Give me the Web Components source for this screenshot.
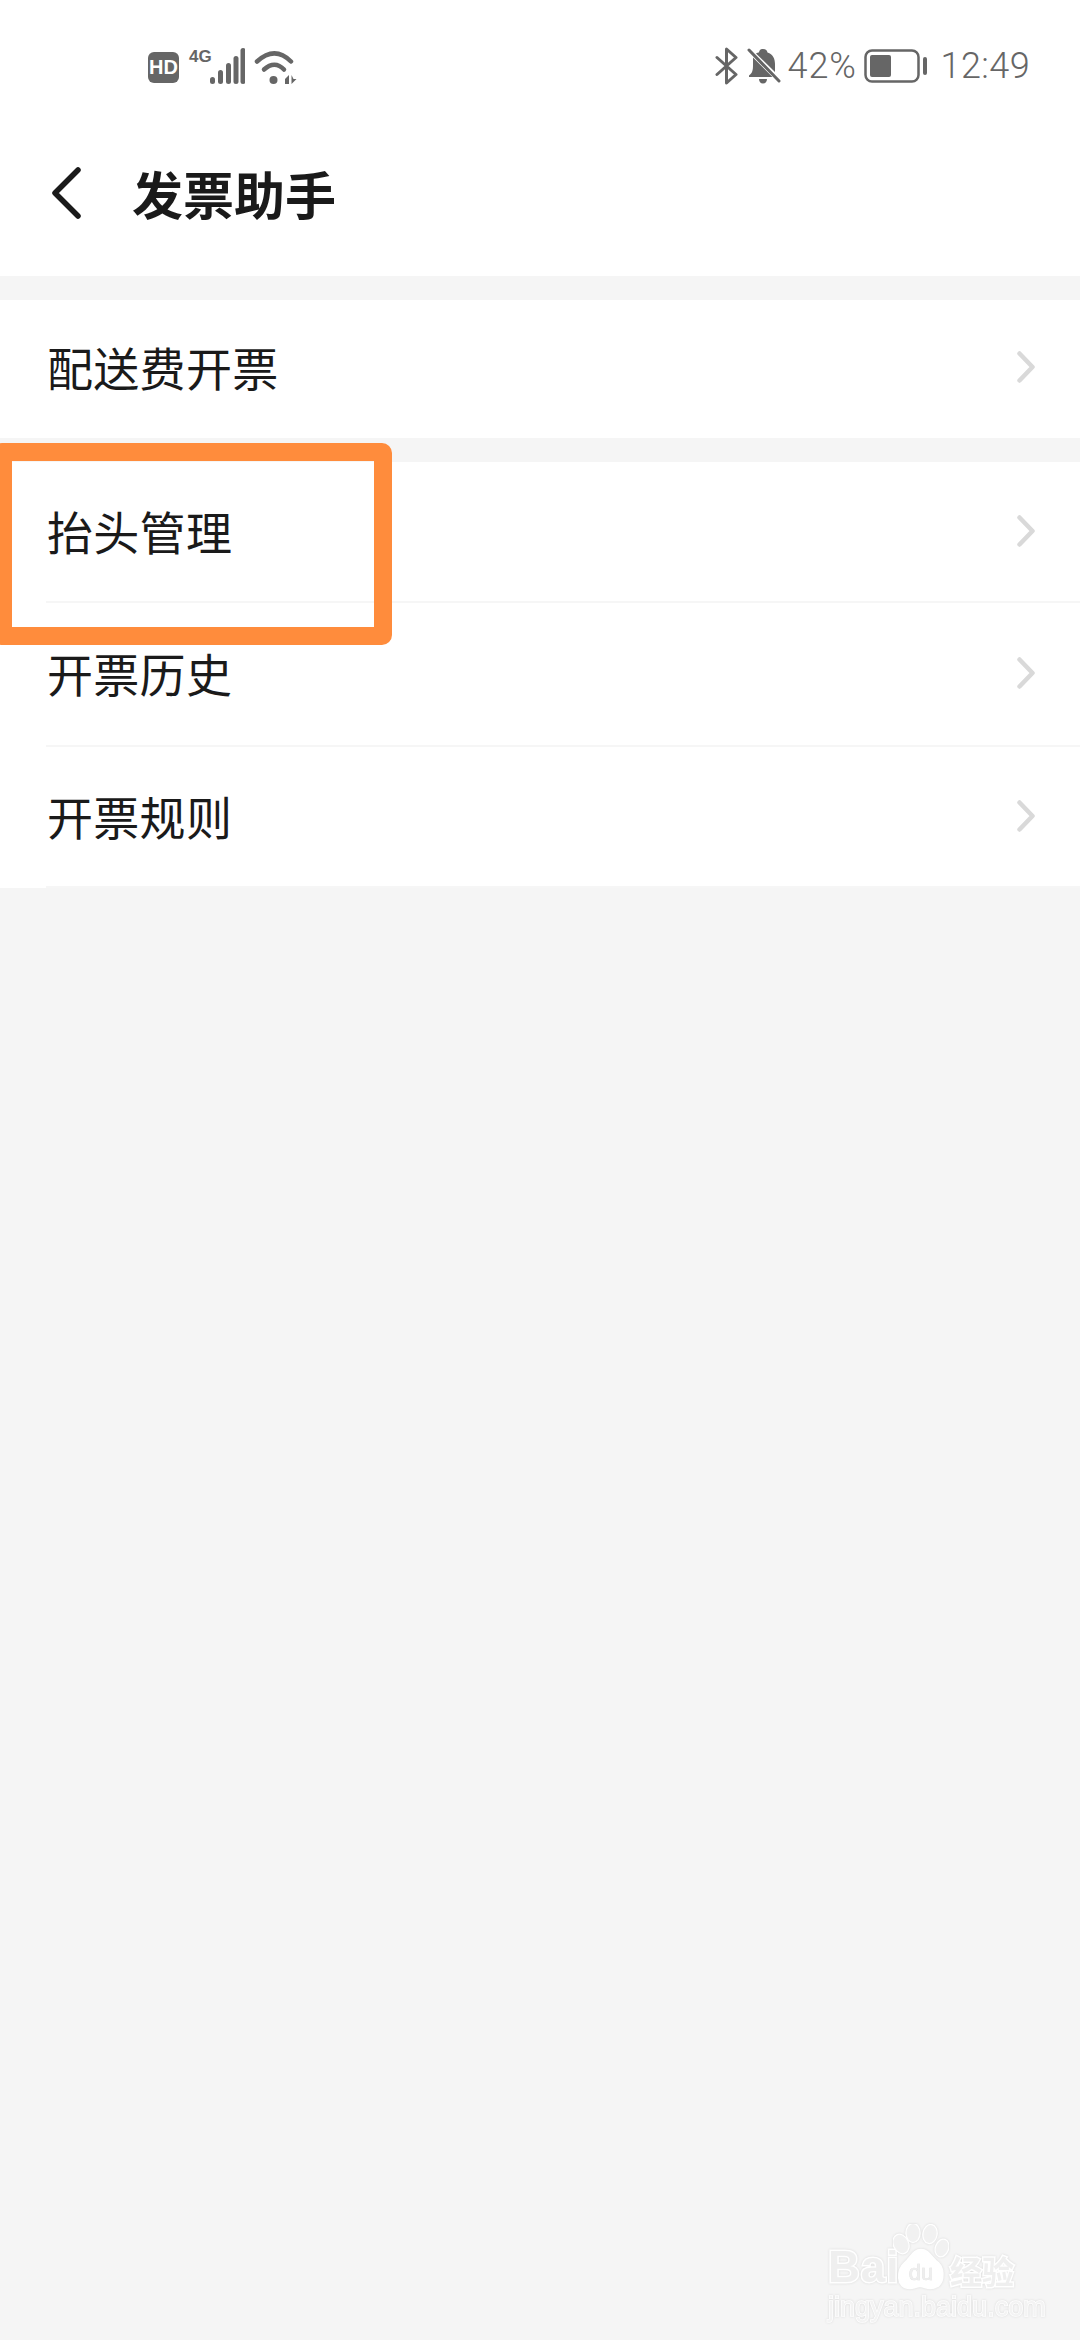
<!DOCTYPE html>
<html lang="zh-CN">
<head>
<meta charset="utf-8">
<title>发票助手</title>
<style>
  html, body { margin: 0; padding: 0; background: #f5f5f5; }
  body { font-family: "Noto Sans CJK SC", "Noto Sans", sans-serif; }
</style>
</head>
<body>
<app-page>
  <status-bar></status-bar>
  <nav-header>发票助手</nav-header>
  <list-group>
    <list-row height="138">配送费开票</list-row>
  </list-group>
  <list-group>
    <list-row height="141" divider>抬头管理</list-row>
    <list-row height="144" divider>开票历史</list-row>
    <list-row height="141" divider>开票规则</list-row>
  </list-group>
  <highlight-box></highlight-box>
  <baidu-mark></baidu-mark>
</app-page>
<script>
'use strict';

(function () {
  class AppPage extends HTMLElement {
    constructor() {
      super();
      const shadow = this.attachShadow({ mode: 'open' });
      shadow.innerHTML = `
      <style>
        :host {
          display: block;
          position: relative;
          width: 1080px;
          height: 2340px;
          overflow: hidden;
          background: #f5f5f5;
          color: #1a1a1a;
          font-family: "Noto Sans CJK SC", "Noto Sans", sans-serif;
        }
      </style>
      <slot></slot>
      `;
    }
  }

  class StatusBar extends HTMLElement {
    constructor() {
      super();
      const shadow = this.attachShadow({ mode: 'open' });
      shadow.innerHTML = `
      <style>
        :host {
          display: flex;
          align-items: center;
          justify-content: space-between;
          height: 132px;
          padding: 0 50px 0 148px;
          box-sizing: border-box;
          width: 1080px;
          background: #fff;
          color: #666;
          font-family: Roboto, "Noto Sans", sans-serif;
        }
        .side { display: flex; align-items: center; }
        svg { display: block; flex: none; }
        .hd {
          width: 31px;
          height: 31px;
          margin-top: 2px;
          border-radius: 6px;
          background: #666;
          color: #fff;
          font: 700 20px/31px "Liberation Sans Narrow", "Liberation Sans", sans-serif;
          text-align: center;
        }
        .net {
          position: relative;
          width: 36px;
          height: 36px;
          margin-left: 30px;
        }
        .tag {
          position: absolute;
          left: -20px;
          top: 0;
          font: 700 17px/17px "Liberation Sans Narrow", "Liberation Sans", sans-serif;
        }
        .text { font-size: 36px; line-height: 40px; font-weight: 300; }
      </style>
      <div class="side">
        <div class="hd">HD</div>
        <div class="net">
          <span class="tag">4G</span>
          <svg width="36" height="36" viewBox="0 0 36 36" fill="#666">
            <rect x="1" y="29" width="5" height="7" rx="2.5"/>
            <rect x="9" y="22" width="5" height="14" rx="2.5"/>
            <rect x="17" y="15" width="5" height="21" rx="2.5"/>
            <rect x="24.500" y="8" width="5" height="28" rx="2.500"/>
            <rect x="31.500" y="0" width="5" height="36" rx="2.500"/>
          </svg>
        </div>
        <svg style="margin-left:9px;margin-top:3px" width="44" height="36" viewBox="0 0 44 36" fill="none">
          <path d="M3 11.500C15 0.500 26 0.500 37 11.500" stroke="#666" stroke-width="4.500" stroke-linecap="round"/>
          <path d="M10 19.500C17 13 24 13 30 19.500" stroke="#666" stroke-width="4.500" stroke-linecap="round"/>
          <circle cx="19.500" cy="30" r="4" fill="#666"/>
          <path d="M31 29l4-4v9h-4zM37.500 25v9l5-5h-3z" fill="#666"/>
        </svg>
      </div>
      <div class="side">
        <svg width="24" height="38" viewBox="0 0 24 38" fill="none" stroke="#666" stroke-width="3" stroke-linecap="round" stroke-linejoin="round">
          <path d="M2 10.500L21 27.500L11.500 36V2L21 10.500L2 27.500"/>
        </svg>
        <svg style="margin-left:8px" width="34" height="36" viewBox="0 0 34 36">
          <path d="M16 1c3 0 4 1.500 4.500 3.500C26 6 28 11 28 16v8L9 5.500C10.500 4.500 11 4.500 12 4.500C12.500 2.500 13 1 16 1zM6 9.500L25.500 29H2v-1.500c3.500-2.500 4-5.500 4-10.500zM12 31h8c0 2.500-1.500 4.500-4 4.500s-4-2-4-4.500z" fill="#666"/>
          <path d="M2 2L32 33" stroke="#666" stroke-width="3" stroke-linecap="round"/>
        </svg>
        <span class="text" style="margin-left:7px;letter-spacing:.8px">42%</span>
        <svg style="margin-left:7px" width="63" height="34" viewBox="0 0 63 34">
          <rect x="1.500" y="1.500" width="53" height="31" rx="6.500" fill="none" stroke="#666" stroke-width="2.500"/>
          <rect x="6" y="6" width="21" height="22" rx="2" fill="#666"/>
          <rect x="59" y="8" width="4" height="18" rx="2" fill="#666"/>
        </svg>
        <span class="text" style="margin-left:14px;letter-spacing:.4px">12:49</span>
      </div>
      `;
    }
  }

  class NavHeader extends HTMLElement {
    constructor() {
      super();
      const shadow = this.attachShadow({ mode: 'open' });
      shadow.innerHTML = `
      <style>
        :host {
          display: flex;
          align-items: center;
          height: 144px;
          padding: 0 0 22px 50px;
          box-sizing: border-box;
          background: #fff;
          margin-bottom: 24px;
        }
        svg { display: block; flex: none; }
        .title {
          margin-left: 50px;
          font-size: 51px;
          line-height: 60px;
          font-weight: 700;
          color: #1a1a1a;
        }
      </style>
      <svg width="32" height="54" viewBox="0 0 32 54" fill="none">
        <path d="M28 4L5 27L28 50" stroke="#1a1a1a" stroke-width="5.500" stroke-linecap="round" stroke-linejoin="round"/>
      </svg>
      <div class="title"><slot></slot></div>
      `;
    }
  }

  class ListGroup extends HTMLElement {
    constructor() {
      super();
      const shadow = this.attachShadow({ mode: 'open' });
      shadow.innerHTML = `
      <style>
        :host {
          display: block;
          background: #fff;
          margin-bottom: 24px;
        }
      </style>
      <slot></slot>
      `;
    }
  }

  class ListRow extends HTMLElement {
    constructor() {
      super();
      const shadow = this.attachShadow({ mode: 'open' });
      shadow.innerHTML = `
      <style>
        :host {
          display: flex;
          align-items: center;
          justify-content: space-between;
          box-sizing: border-box;
          padding: 0 45px 0 47px;
          position: relative;
          font-size: 46px;
          letter-spacing: .3px;
          color: #1a1a1a;
        }
        :host([divider])::after {
          content: "";
          position: absolute;
          left: 46px;
          right: 0;
          bottom: 0;
          height: 2px;
          background: #f6f6f6;
        }
        .label { line-height: 60px; margin-bottom: 6px; }
        svg { display: block; flex: none; margin-bottom: 4px; }
      </style>
      <span class="label"><slot></slot></span>
      <svg width="18" height="32" viewBox="0 0 18 32" fill="none">
        <path d="M2.500 2.500L15.500 16L2.500 29.500" stroke="#d9d9d9" stroke-width="4.500" stroke-linecap="round" stroke-linejoin="round"/>
      </svg>
      `;
    }
    connectedCallback() {
      this.style.height = this.getAttribute('height') + 'px';
    }
  }

  // annotation drawn over the list
  class HighlightBox extends HTMLElement {
    constructor() {
      super();
      const shadow = this.attachShadow({ mode: 'open' });
      shadow.innerHTML = `
      <style>
        :host {
          position: absolute;
          left: -8px;
          top: 443px;
          width: 400px;
          height: 202px;
          box-sizing: border-box;
          border: solid #ff8c3c;
          border-width: 18px 18px 18px 20px;
          border-radius: 10px;
        }
      </style>
      `;
    }
  }

  class BaiduMark extends HTMLElement {
    constructor() {
      super();
      const shadow = this.attachShadow({ mode: 'open' });
      shadow.innerHTML = `
      <style>
        :host {
          position: absolute;
          left: 828px;
          top: 2224px;
          width: 200px;
          height: 100px;
          display: flex;
          flex-direction: column;
          color: #efefef;
          -webkit-text-stroke: 3px #fff;
          paint-order: stroke fill;
          font-family: "Liberation Sans", sans-serif;
          filter: drop-shadow(0 0 1px #d8d8d8);
        }
        .top { display: flex; align-items: flex-end; height: 66px; }
        .bai { font-size: 44px; line-height: 46px; font-weight: 700; letter-spacing: 1px; width: 68px; }
        svg { display: block; flex: none; margin-left: -3px; }
        .jy { font: 700 32px/40px "Noto Sans CJK SC", sans-serif; margin-left: 1px; white-space: nowrap; }
        .url { font-size: 27px; line-height: 30px; margin-top: 2px; white-space: nowrap; color: #f3f3f3; -webkit-text-stroke-width: 1.500px; }
      </style>
      <div class="top">
        <span class="bai">Bai</span>
        <svg width="56" height="66" viewBox="0 0 56 66" fill="#f1f1f1" stroke="#fff" stroke-width="2.500">
          <ellipse cx="8" cy="20" rx="7" ry="9.500" transform="rotate(-25 8 20)"/>
          <ellipse cx="20" cy="9" rx="6.500" ry="9"/>
          <ellipse cx="37" cy="10" rx="6.500" ry="9" transform="rotate(10 37 10)"/>
          <ellipse cx="49" cy="24" rx="6" ry="8.500" transform="rotate(20 49 24)"/>
          <path d="M28 26c8 0 10 8 17 13c7 6 7 25-8 25c-4 0-6-2-10-2s-6 2-10 2C3 64 4 46 12 39c6-5 8-13 16-13z" fill="#fff"/>
          <text x="28" y="56" text-anchor="middle" font-size="22" font-family="Liberation Sans, sans-serif" fill="#eeeeee" stroke="#dddddd" stroke-width="0.600">du</text>
        </svg>
        <span class="jy">经验</span>
      </div>
      <div class="url">jingyan.baidu.com</div>
      `;
    }
  }

  customElements.define('app-page', AppPage);
  customElements.define('status-bar', StatusBar);
  customElements.define('nav-header', NavHeader);
  customElements.define('list-group', ListGroup);
  customElements.define('list-row', ListRow);
  customElements.define('highlight-box', HighlightBox);
  customElements.define('baidu-mark', BaiduMark);
})();
</script>
</body>
</html>
